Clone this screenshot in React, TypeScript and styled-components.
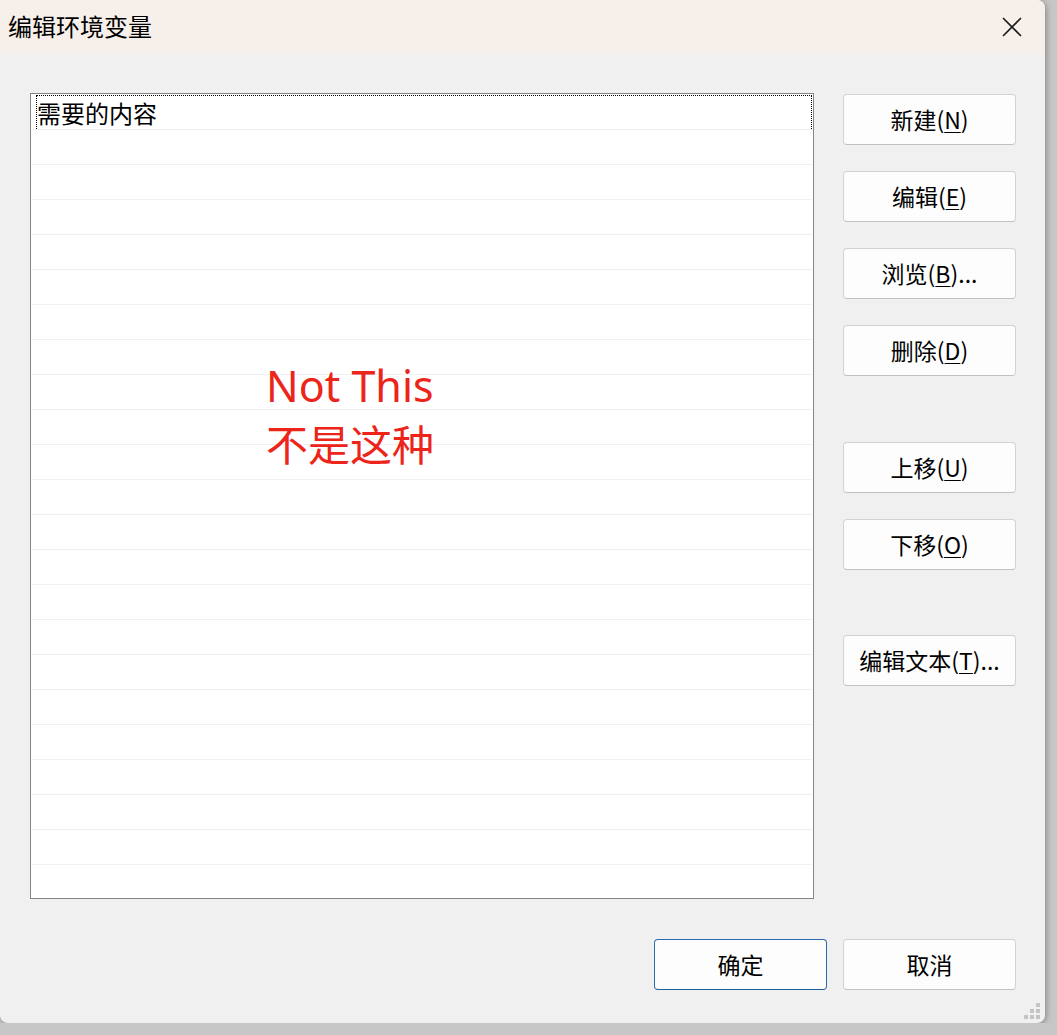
import React from 'react'
import styled, { createGlobalStyle } from 'styled-components'

const GlobalStyle = createGlobalStyle`
  html, body {
    margin: 0;
    padding: 0;
    background: #c7c7c7;
    font-family: "Noto Sans CJK SC", "Noto Sans", sans-serif;
  }
`

const Window = styled.div`
  position: relative;
  width: 1045px;
  height: 1023px;
  background: #f0f0f0;
  border-radius: 0 8px 8px 8px;
  box-shadow: 1px 1px 6px rgba(0, 0, 0, 0.35);
  display: flex;
  flex-direction: column;
  overflow: hidden;
`

const TitleBar = styled.div`
  height: 53px;
  flex-shrink: 0;
  background: #f7f0ea;
  display: flex;
  align-items: center;
  justify-content: space-between;
  padding: 0 22px 0 8px;
`

const Title = styled.span`
  font-size: 24px;
  color: #000;
  line-height: 1;
  margin-top: -1px;
`

const CloseBtn = styled.div`
  width: 22px;
  height: 22px;
  display: flex;
  align-items: center;
  justify-content: center;
`

const Main = styled.div`
  display: flex;
  padding: 40px 0 0 30px;
`

const List = styled.div`
  position: relative;
  width: 784px;
  height: 806px;
  box-sizing: border-box;
  border: 1px solid #858585;
  background: #fff;
  padding-top: 1px;
  overflow: hidden;
`

const Row = styled.div`
  height: 35px;
  box-sizing: border-box;
  margin: 0 1px 0 1px;
  border-bottom: 1px solid #f0f0f0;
`

const FocusRow = styled.div`
  height: 34px;
  box-sizing: border-box;
  margin-left: 4px;
  border: 1px dotted #000;
  border-bottom: none;
  padding-left: 0;
  font-size: 24px;
  line-height: 34px;
  color: #000;
`

const Note = styled.div`
  position: absolute;
  left: 235px;
  top: 263px;
  color: #ec2419;
  font-family: "Noto Sans", "Noto Sans CJK SC", sans-serif;
  font-size: 43px;
  line-height: 57px;
`

const NoteCjk = styled.div`
  font-family: "Noto Sans CJK SC", sans-serif;
  font-size: 42px;
`

const Side = styled.div`
  display: flex;
  flex-direction: column;
  margin-left: 29px;
  padding-top: 1px;
`

const Button = styled.button<{ $gap?: number; $primary?: boolean }>`
  width: 173px;
  height: 51px;
  margin-top: ${p => p.$gap ?? 0}px;
  box-sizing: border-box;
  background: #fdfdfd;
  border: 1px solid ${p => (p.$primary ? '#2a6cb0' : '#d2d2d2')};
  border-bottom-color: ${p => (p.$primary ? '#1f5f9f' : '#c2c2c2')};
  border-radius: 4px;
  font-family: "Noto Sans CJK SC", "Noto Sans", sans-serif;
  font-size: 23px;
  color: #000;
  padding: 0;
  display: flex;
  align-items: center;
  justify-content: center;
  line-height: 1;
`

const Key = styled.span`
  text-decoration: underline;
  text-underline-offset: 3px;
  text-decoration-thickness: 1px;
`

const Footer = styled.div`
  display: flex;
  justify-content: flex-end;
  gap: 16px;
  margin-top: 40px;
  padding-right: 29px;
`

const Grip = styled.svg`
  position: absolute;
  right: 3px;
  bottom: 4px;
`

function App() {
  const rows = Array.from({ length: 22 })

  return (
    <>
      <GlobalStyle />
      <Window>
        <TitleBar>
          <Title>编辑环境变量</Title>
          <CloseBtn>
            <svg width="20" height="20" viewBox="0 0 20 20">
              <path d="M1 1 L19 19 M19 1 L1 19" stroke="#1a1a1a" strokeWidth="1.6" fill="none" />
            </svg>
          </CloseBtn>
        </TitleBar>
        <Main>
          <List>
            <Row>
              <FocusRow>需要的内容</FocusRow>
            </Row>
            {rows.map((_, i) => (
              <Row key={i} />
            ))}
            <Note>
              <div>Not This</div>
              <NoteCjk>不是这种</NoteCjk>
            </Note>
          </List>
          <Side>
            <Button>新建(<Key>N</Key>)</Button>
            <Button $gap={26}>编辑(<Key>E</Key>)</Button>
            <Button $gap={26}>浏览(<Key>B</Key>)...</Button>
            <Button $gap={26}>删除(<Key>D</Key>)</Button>
            <Button $gap={66}>上移(<Key>U</Key>)</Button>
            <Button $gap={26}>下移(<Key>O</Key>)</Button>
            <Button $gap={65}>编辑文本(<Key>T</Key>)...</Button>
          </Side>
        </Main>
        <Footer>
          <Button $primary>确定</Button>
          <Button>取消</Button>
        </Footer>
        <Grip width="18" height="16" viewBox="0 0 18 16">
          <rect x="12" y="0" width="4" height="4" fill="#c4c4c4" />
          <rect x="6" y="6" width="4" height="4" fill="#c4c4c4" />
          <rect x="12" y="6" width="4" height="4" fill="#c4c4c4" />
          <rect x="0" y="12" width="4" height="4" fill="#c4c4c4" />
          <rect x="6" y="12" width="4" height="4" fill="#c4c4c4" />
          <rect x="12" y="12" width="4" height="4" fill="#c4c4c4" />
        </Grip>
      </Window>
    </>
  )
}

export default App
